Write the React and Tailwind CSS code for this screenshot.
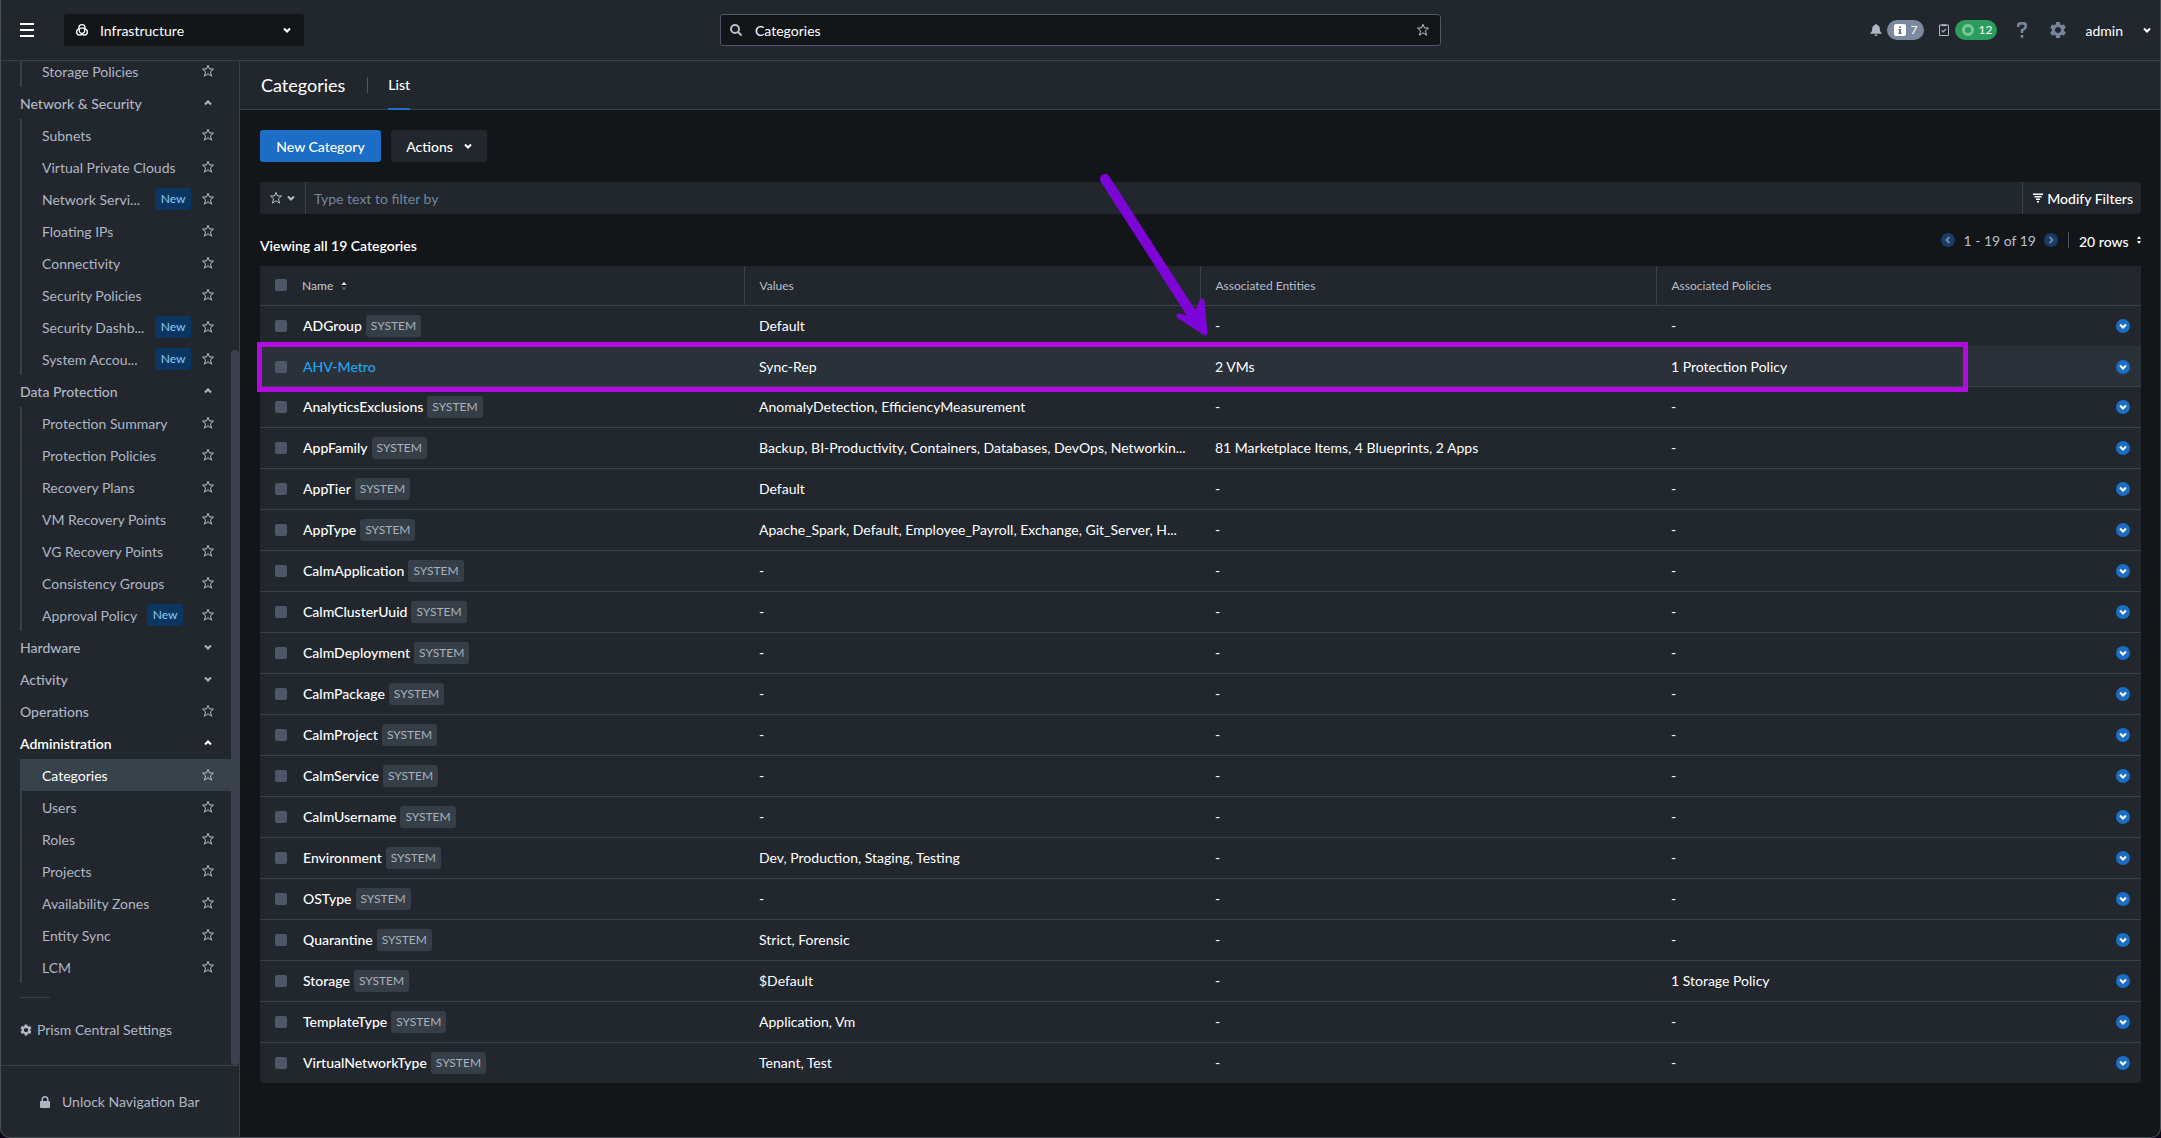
import React from "react";
import { MdSettings } from "react-icons/md";

const navGroups = [
  { items: [["Storage Policies"]] },
  {
    title: "Network & Security",
    open: true,
    items: [
      ["Subnets"],
      ["Virtual Private Clouds"],
      ["Network Servi...", true],
      ["Floating IPs"],
      ["Connectivity"],
      ["Security Policies"],
      ["Security Dashb...", true],
      ["System Accou...", true],
    ],
  },
  {
    title: "Data Protection",
    open: true,
    items: [
      ["Protection Summary"],
      ["Protection Policies"],
      ["Recovery Plans"],
      ["VM Recovery Points"],
      ["VG Recovery Points"],
      ["Consistency Groups"],
      ["Approval Policy", true],
    ],
  },
  { title: "Hardware", items: [] },
  { title: "Activity", items: [] },
  { title: "Operations", star: true, items: [] },
  {
    title: "Administration",
    open: true,
    current: true,
    items: [
      ["Categories"],
      ["Users"],
      ["Roles"],
      ["Projects"],
      ["Availability Zones"],
      ["Entity Sync"],
      ["LCM"],
    ],
  },
];

const rows = [
  ["ADGroup", "Default", "-", "-"],
  ["AHV-Metro", "Sync-Rep", "2 VMs", "1 Protection Policy"],
  ["AnalyticsExclusions", "AnomalyDetection, EfficiencyMeasurement", "-", "-"],
  ["AppFamily", "Backup, BI-Productivity, Containers, Databases, DevOps, Networkin...", "81 Marketplace Items, 4 Blueprints, 2 Apps", "-"],
  ["AppTier", "Default", "-", "-"],
  ["AppType", "Apache_Spark, Default, Employee_Payroll, Exchange, Git_Server, H...", "-", "-"],
  ["CalmApplication", "-", "-", "-"],
  ["CalmClusterUuid", "-", "-", "-"],
  ["CalmDeployment", "-", "-", "-"],
  ["CalmPackage", "-", "-", "-"],
  ["CalmProject", "-", "-", "-"],
  ["CalmService", "-", "-", "-"],
  ["CalmUsername", "-", "-", "-"],
  ["Environment", "Dev, Production, Staging, Testing", "-", "-"],
  ["OSType", "-", "-", "-"],
  ["Quarantine", "Strict, Forensic", "-", "-"],
  ["Storage", "$Default", "-", "1 Storage Policy"],
  ["TemplateType", "Application, Vm", "-", "-"],
  ["VirtualNetworkType", "Tenant, Test", "-", "-"],
];

function Star() {
  return (
    <svg className="size-3.5" viewBox="0 0 14 14" fill="none" stroke="currentColor" aria-hidden="true">
      <path d="M7 1.4 8.5 5h4L9.4 7.8l1.2 4.4L7 9.8l-3.6 2.4 1.2-4.4L1.5 5h4z" strokeLinejoin="round" />
    </svg>
  );
}

function Chevron({ up = false }) {
  return (
    <svg className="h-2 w-2" viewBox="0 0 8 8" fill="none" stroke="currentColor" strokeWidth="2" aria-hidden="true">
      <path d={up ? "M1 5.5 4 2.5 7 5.5" : "M1 2.5 4 5.5 7 2.5"} />
    </svg>
  );
}

function Sorter() {
  return (
    <svg className="h-2.5 w-1.5" viewBox="0 0 6 10" aria-hidden="true">
      <path d="M3 1 5.5 4h-5z" fill="#fff" />
      <path d="M3 9.5 5.5 6.5h-5z" fill="#59616c" />
    </svg>
  );
}

function Check({ label }) {
  return (
    <input type="checkbox" aria-label={label} className="block size-3 appearance-none rounded-[2px] bg-[#4d5768]" />
  );
}

function NavItem({ label, isNew, current }) {
  return (
    <li className={current ? "-ml-0.5 flex h-8 items-center bg-[#38424a] pl-[22px] text-white" : "flex h-8 items-center pl-5"}>
      <a href="#" className={label.endsWith("...") ? "w-[103px] whitespace-nowrap pt-0.5" : "whitespace-nowrap pt-0.5"}>{label}</a>
      {isNew && (
        <span className="ml-2.5 flex h-[22px] w-9 items-center justify-center rounded-[3px] bg-[#0b3661] text-[12px] text-[#8fcbf8]">New</span>
      )}
      <button type="button" aria-label={"Favorite " + label} className="ml-auto mr-4 text-[#b8bfca]"><Star /></button>
    </li>
  );
}

function Sidebar() {
  return (
    <aside className="flex w-60 shrink-0 flex-col border-r border-[#38414a] bg-[#22272e] text-[14px] leading-5 text-[#b0b6c3]">
      <div className="flex min-h-0 flex-1 overflow-hidden">
        <nav aria-label="Main" className="-mt-1.5 flex-1 pl-5">
          {navGroups.map((g, i) => (
            <section key={i}>
              {g.title && (
                <h2 className={g.current ? "flex h-8 items-center font-semibold text-white" : "flex h-8 items-center font-medium"}>
                  <a href="#" className="flex-1 pt-0.5">{g.title}</a>
                  <button type="button" aria-label={"Toggle " + g.title} className={g.star ? "mr-4" : "mr-[19px]"}>
                    {g.star ? <Star /> : <Chevron up={g.open} />}
                  </button>
                </h2>
              )}
              {g.items.length > 0 && (
                <ul className="border-l-2 border-[#38414a]">
                  {g.items.map(([label, isNew]) => (
                    <NavItem key={label} label={label} isNew={isNew} current={label === "Categories"} />
                  ))}
                </ul>
              )}
            </section>
          ))}
          <hr className="mt-3.5 w-[30px] border-[#38414a]" />
          <a href="#" className="-ml-px mt-[22px] flex items-center gap-1">
            <MdSettings className="size-3.5" aria-hidden="true" />
            Prism Central Settings
          </a>
        </nav>
        <div className="mt-[289px] w-2 rounded-full bg-[#3c424d]" />
      </div>
      <button type="button" className="flex h-[73px] items-center gap-3 border-t border-[#38414a] pl-10">
        <svg className="h-3 w-2.5" viewBox="0 0 10 12" fill="currentColor" aria-hidden="true">
          <path fillRule="evenodd" d="M1.5 5V3.5a3.5 3.5 0 0 1 7 0V5H9a1 1 0 0 1 1 1v5a1 1 0 0 1-1 1H1a1 1 0 0 1-1-1V6a1 1 0 0 1 1-1zM3 5h4V3.5a2 2 0 0 0-4 0z" />
        </svg>
        Unlock Navigation Bar
      </button>
    </aside>
  );
}

function Header() {
  return (
    <header className="grid h-[61px] shrink-0 grid-cols-[1fr_minmax(0,721px)_1fr] items-center border-b border-[#38414a] bg-[#22272e] text-[14px] text-white">
      <div className="flex items-center pl-5">
        <button type="button" aria-label="Menu" className="flex w-3.5 flex-col gap-1">
          <span className="h-0.5 bg-white" />
          <span className="h-0.5 bg-white" />
          <span className="h-0.5 bg-white" />
        </button>
        <div className="relative ml-[30px] w-60">
          <svg className="absolute left-3 top-2.5 size-3" viewBox="0 0 12 12" aria-hidden="true">
            <g fill="#fff">
              <circle cx="6" cy="3.7" r="3.7" />
              <circle cx="3.7" cy="8" r="3.7" />
              <circle cx="8.3" cy="8" r="3.7" />
            </g>
            <g fill="#131619">
              <circle cx="6" cy="3.7" r="2.4" />
              <circle cx="3.7" cy="8" r="2.4" />
              <circle cx="8.3" cy="8" r="2.4" />
            </g>
            <circle cx="6" cy="6.6" r="2.8" fill="#131619" stroke="#fff" strokeWidth="1.2" />
          </svg>
          <select aria-label="Application" className="block h-8 w-full appearance-none rounded-[3px] bg-[#131619] pl-9 text-white">
            <option>Infrastructure</option>
          </select>
          <span className="pointer-events-none absolute right-[13px] top-3"><Chevron /></span>
        </div>
      </div>
      <div className="relative text-[#b8bfca]">
        <svg className="absolute left-2.5 top-2.5 size-3" viewBox="0 0 12 12" fill="none" stroke="currentColor" strokeWidth="2" aria-hidden="true">
          <circle cx="5" cy="5" r="4" />
          <path d="m8 8 3.5 3.5" />
        </svg>
        <input type="text" aria-label="Search" defaultValue="Categories" className="block h-8 w-full rounded-[3px] border border-[#4d5768] bg-[#131619] pl-[34px] pr-10 text-white" />
        <button type="button" aria-label="Favorite" className="absolute right-[11px] top-[9px]"><Star /></button>
      </div>
      <div className="flex items-center justify-end pr-2.5">
        <button type="button" aria-label="Alerts" className="flex items-center gap-[5px] text-[#b0b6c3]">
          <svg className="h-3 w-3" viewBox="0 0 12 12" fill="currentColor" aria-hidden="true">
            <path d="M6 0a1 1 0 0 1 1 1c2 .5 2.8 2 2.8 4 0 2 .7 3 1.9 4v.7H.3V9C1.5 8 2.2 7 2.2 5c0-2 .8-3.5 2.8-4a1 1 0 0 1 1-1zM4.5 10.4h3a1.5 1.5 0 0 1-3 0z" />
          </svg>
          <span className="flex h-5 w-[37px] items-center gap-[5px] rounded-full bg-[#7b8a9e] pl-[7px] text-[12px] text-white">
            <svg className="size-3" viewBox="0 0 12 12" aria-hidden="true">
              <rect width="12" height="12" rx="2" fill="#fff" />
              <path d="M5 2.5h2V4H5zM4.3 5H7v3.8h.8V10H4.3V8.8H5V6.2h-.7z" fill="#66758a" />
            </svg>
            7
          </span>
        </button>
        <button type="button" aria-label="Tasks" className="ml-[15px] flex items-center gap-1.5 text-[#b0b6c3]">
          <svg className="h-3 w-2.5" viewBox="0 0 10 12" fill="none" stroke="currentColor" aria-hidden="true">
            <path d="M.5 1h9v10.5h-9z" />
            <path d="M2.5 1.2h5" strokeWidth="1.8" />
            <path d="m2.8 6.3 1.5 1.5 2.7-3" strokeWidth="1.2" />
          </svg>
          <span className="flex h-5 w-[42px] items-center gap-[5px] rounded-full bg-[#2a9d5c] pl-[7px] text-[12px] text-white">
            <svg className="size-3" viewBox="0 0 12 12" aria-hidden="true">
              <circle cx="6" cy="6" r="4.5" fill="none" stroke="#7cc59b" strokeWidth="3" />
            </svg>
            12
          </span>
        </button>
        <button type="button" aria-label="Help" className="ml-5 text-[#76859b]">
          <svg className="h-4 w-2.5" viewBox="0 0 10 16" fill="none" stroke="currentColor" strokeWidth="2.6" aria-hidden="true">
            <path d="M1.3 5V3.3Q1.3 1.4 3.4 1.4H6.6Q8.7 1.4 8.7 3.3V4.6Q8.7 6 7.3 6.8L5 8.2V11" />
            <path d="M5 13v2.8" />
          </svg>
        </button>
        <button type="button" aria-label="Settings" className="ml-[21px] text-[#76859b]">
          <MdSettings className="size-5" aria-hidden="true" />
        </button>
        <button type="button" className="ml-[18px] flex items-center gap-5">admin <Chevron /></button>
      </div>
    </header>
  );
}

function CategoryTable() {
  return (
    <div className="relative mt-2.5">
      <div className="overflow-hidden rounded-b-[4px] bg-[#22272e]">
        <table className="w-full table-fixed text-left text-[14px] leading-5 text-white">
          <colgroup>
            <col className="w-7" />
            <col />
            <col />
            <col />
            <col />
            <col className="w-[29px]" />
          </colgroup>
          <thead>
            <tr className="h-[39px] border-b border-[#38414a] text-[12px] text-[#b8bfca]">
              <th className="pl-[15px]"><Check label="Select all" /></th>
              <th className="border-r border-[#38414a] pl-3.5 font-medium">
                <button type="button" className="flex items-center gap-2 pt-0.5">Name <Sorter /></button>
              </th>
              <th className="border-r border-[#38414a] pl-[15px] pt-0.5 font-normal">Values</th>
              <th className="border-r border-[#38414a] pl-[15px] pt-0.5 font-normal">Associated Entities</th>
              <th className="pl-[15px] pt-0.5 font-normal">Associated Policies</th>
              <th />
            </tr>
          </thead>
          <tbody>
            {rows.map(([name, values, entities, policies], i) => (
              <tr
                key={name}
                className={
                  i === 0 || i === rows.length - 1
                    ? "h-[41px]"
                    : i === 1
                      ? "h-10 border-b border-[#38414a] bg-[#2a3138] [&>td]:pt-0.5"
                      : "h-[41px] border-b border-[#38414a]"
                }
              >
                <td className="pl-[15px]"><Check label={"Select " + name} /></td>
                <td className="pl-[15px]">
                  {i === 1 ? (
                    <a href="#" className="font-medium text-[#22a5f7]">{name}</a>
                  ) : (
                    <div className="flex items-center gap-1">
                      <span className="font-medium">{name}</span>
                      <span className="flex h-[22px] items-center rounded-[3px] bg-[#363f47] px-[5px] text-[12px] text-[#a9b1be]">SYSTEM</span>
                    </div>
                  )}
                </td>
                <td className="truncate pl-[15px]">{values}</td>
                <td className="truncate pl-[15px]">{entities}</td>
                <td className="truncate pl-[15px]">{policies}</td>
                <td className="pl-1">
                  <button type="button" aria-label={"Actions for " + name} className="flex size-3.5 items-center justify-center rounded-full bg-[#1b6dc6]">
                    <Chevron />
                  </button>
                </td>
              </tr>
            ))}
          </tbody>
        </table>
      </div>
      <div className="pointer-events-none absolute -left-[3px] right-[173px] top-[76px] h-[50px] border-[5px] border-[#b20ae0]" />
      <svg className="pointer-events-none absolute -top-[93px] left-[836px] h-[168px] w-[120px]" viewBox="0 0 120 168" fill="#7d05d8" stroke="#7d05d8" strokeLinejoin="round" strokeLinecap="round" aria-hidden="true">
        <path d="M9 6 101 149" strokeWidth="10" />
        <path d="M109 160 83 143 98 147 106 128z" strokeWidth="5" />
      </svg>
    </div>
  );
}

function Main() {
  return (
    <main className="min-w-0 flex-1 bg-[#131619] text-[14px] text-white">
      <div className="flex h-[49px] items-center border-b border-[#38414a] bg-[#22272e] pl-[21px]">
        <h1 className="text-[18px]">Categories</h1>
        <div className="ml-[22px] h-4 w-px bg-[#4d5768]" />
        <a href="#" className="ml-5 mt-px flex h-[48px] items-center border-b-2 border-[#1b6dc6] font-medium">List</a>
      </div>
      <div className="px-5 pt-5">
        <div className="flex gap-2.5">
          <button type="button" className="h-8 w-[121px] rounded-[3px] bg-[#1b6dc6] font-medium">New Category</button>
          <button type="button" className="flex h-8 w-24 items-center justify-center gap-[11px] rounded-[3px] bg-[#22272e] font-medium">
            Actions <Chevron />
          </button>
        </div>
        <div className="mt-5 flex h-8 items-stretch rounded-[3px] bg-[#22272e]">
          <button type="button" aria-label="Saved filters" className="flex w-[46px] items-center gap-1 border-r border-[#38414a] pl-[9px] text-[#b8bfca]">
            <Star /><Chevron />
          </button>
          <input type="text" aria-label="Filter" placeholder="Type text to filter by" className="min-w-0 flex-1 pl-2 placeholder:text-[#76859b]" />
          <button type="button" className="flex items-center gap-1 border-l border-[#38414a] pl-2.5 pr-2 font-medium">
            <svg className="h-2.5 w-2.5" viewBox="0 0 10 10" stroke="currentColor" strokeWidth="1.4" aria-hidden="true">
              <path d="M0 1.2h10M1.5 3.7h7M3 6.2h4M4 8.7h2" />
            </svg>
            Modify Filters
          </button>
        </div>
        <div className="mt-[14px] flex h-7 items-center">
          <h2 className="flex-1 pt-1.5 font-semibold">Viewing all 19 Categories</h2>
          <div className="flex items-center pb-1">
            <button type="button" aria-label="Previous page" className="flex size-3.5 items-center justify-center rounded-full bg-[#163c6b] text-[#7f8794]">
              <svg className="size-2" viewBox="0 0 8 8" fill="none" stroke="currentColor" strokeWidth="1.8" aria-hidden="true"><path d="M5.5 1 2.5 4l3 3" /></svg>
            </button>
            <span className="mx-2 text-[#b8bfca]">1 - 19 of 19</span>
            <button type="button" aria-label="Next page" className="flex size-3.5 items-center justify-center rounded-full bg-[#163c6b] text-[#7f8794]">
              <svg className="size-2" viewBox="0 0 8 8" fill="none" stroke="currentColor" strokeWidth="1.8" aria-hidden="true"><path d="M2.5 1l3 3-3 3" /></svg>
            </button>
            <div className="ml-2.5 h-4 w-px bg-[#4d5768]" />
            <select aria-label="Rows per page" className="ml-2.5 appearance-none pt-0.5 font-medium">
              <option>20 rows</option>
            </select>
            <svg className="ml-2 h-2 w-1" viewBox="0 0 4 8" fill="currentColor" aria-hidden="true"><path d="M2 0l2 3H0zM2 8l2-3H0z" /></svg>
          </div>
        </div>
        <CategoryTable />
      </div>
    </main>
  );
}

export default function App() {
  return (
    <div className="relative h-screen bg-[#0d0618] font-['Lato','Noto_Sans',sans-serif]">
      <div className="flex h-full flex-col overflow-hidden rounded-b-[10px]">
        <Header />
        <div className="flex min-h-0 flex-1">
          <Sidebar />
          <Main />
        </div>
      </div>
      <div className="pointer-events-none absolute inset-0 rounded-b-[10px] border-x border-b border-[#4a4f56]" />
    </div>
  );
}
